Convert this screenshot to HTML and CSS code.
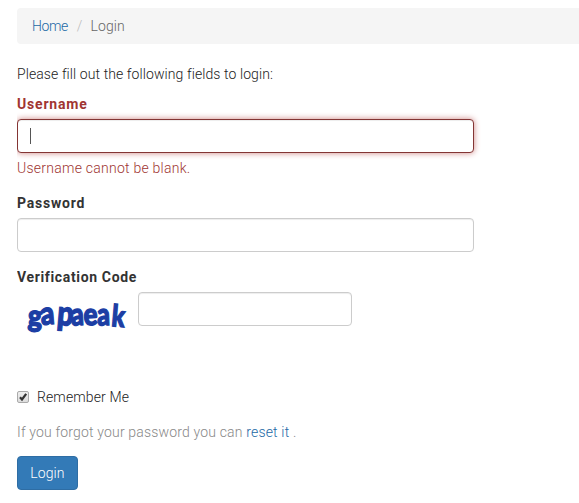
FILE: index.html
```html
<!DOCTYPE html>
<html lang="en">
<head>
  <meta charset="UTF-8" />
  <meta name="viewport" content="width=device-width, initial-scale=1.0"/>
  <title>Login</title>
  <link rel="stylesheet" href="styles.css">
</head>
<body>

  <ul class="breadcrumb">
    <li><a href="#">Home</a></li>
    <li class="active">Login</li>
  </ul>

  <p class="intro">Please fill out the following fields to login:</p>

  <form class="login-form" onsubmit="return false;">
    <div class="form-group has-error">
      <label class="username-label" for="username">Username</label>
      <input type="text" id="username" class="form-control focused" />
      <p class="help-block">Username cannot be blank.</p>
    </div>

    <div class="form-group">
      <label class="password-label" for="password">Password</label>
      <input type="password" id="password" class="form-control" />
    </div>

    <div class="form-group captcha-group">
      <label class="code-label" for="code">Verification Code</label>
      <div class="captcha-row">
        <svg class="captcha" width="120" height="50" viewBox="0 0 120 50">
          <text transform="translate(10.5 34) rotate(3) scale(.9 1)" font-size="30">g</text>
          <text transform="translate(24.5 33) rotate(-5) scale(.83 1)" font-size="32">a</text>
          <text transform="translate(39.5 32.5) rotate(5) scale(.84 1)" font-size="34">p</text>
          <text transform="translate(54.5 33.5) rotate(-3) scale(.8 1)" font-size="31">a</text>
          <text transform="translate(67 33.5) rotate(-3) scale(.84 1)" font-size="31">e</text>
          <text transform="translate(80.5 33.5) rotate(-2) scale(.8 1)" font-size="31">a</text>
          <text transform="translate(94 34) rotate(5) scale(.8 1)" font-size="30">k</text>
        </svg>
        <input type="text" id="code" class="form-control" />
      </div>
    </div>

    <div class="checkbox">
      <label>
        <span class="check">
          <svg width="12" height="12" viewBox="0 0 12 12"><path d="M3 6.2 5 8.5 9.2 2.8" /></svg>
        </span>
        <span class="remember">Remember Me</span>
      </label>
    </div>

    <div class="hint">If you forgot your password you can <a href="#">reset it</a> .</div>

    <button type="submit" class="btn">Login</button>
  </form>

</body>
</html>
```

FILE: styles.css
```css
* { box-sizing: border-box; }
body { font-family: Roboto, "Liberation Sans", sans-serif; font-size: 14px; font-weight: 300; line-height: 20px; color: #222; background: #fff; margin: 8px 0 0 17px; overflow: hidden; }
a { color: #2268a5; text-decoration: none; }

/* Breadcrumb */
.breadcrumb { display: flex; list-style: none; height: 36px; margin: 0 0 20px; padding: 8px 15px; background: #f5f5f5; border-radius: 4px 0 0 4px; }
.breadcrumb a { letter-spacing: -.4px; }
.breadcrumb .active { color: #666; letter-spacing: .1px; }
.breadcrumb .active::before { content: "/"; color: #bbb; padding: 0 8px 0 9px; }

.intro { margin: 0 0 10px; letter-spacing: .09px; }

/* Form */
.login-form { width: 457px; }
.form-group { margin-bottom: 15px; }
.form-group label { display: block; width: max-content; font-weight: 700; letter-spacing: .8px; margin-bottom: 5px; color: #333; }
.form-group .code-label { letter-spacing: .65px; }
.form-control { display: block; width: 100%; height: 34px; padding: 6px 12px; font: inherit; color: #555; background-color: #fff; border: 1px solid #ccc; border-radius: 4px; box-shadow: inset 0 1px 1px rgba(0,0,0,.075); outline: none; }
.has-error .username-label, .has-error .help-block { color: #a03532; }
.has-error .focused { border-color: #843534; box-shadow: inset 0 1px 1px rgba(0,0,0,.075), 0 0 6px #ce8483; }
.focused { background: #fff linear-gradient(#555, #555) 12px 8px / 1px 16px no-repeat; }
.help-block { width: max-content; margin: 5px 0 0; letter-spacing: .25px; }

/* Captcha */
.captcha-group { margin-bottom: 45px; }
.captcha-row { display: flex; gap: 1px; }
.captcha-row .form-control { width: 214px; }
.captcha { flex: none; font-family: Lato, sans-serif; font-weight: 900; fill: #1c3ea4; stroke: #1c3ea4; stroke-width: 1.4; }

/* Remember me */
.checkbox label { display: flex; align-items: center; letter-spacing: .12px; }
.check { display: flex; width: 12px; height: 12px; margin-right: 8px; border: 1px solid #aaa; border-radius: 2px; background: linear-gradient(#eee, #ddd); }
.check svg { flex: none; margin: -1px; fill: none; stroke: #333; stroke-width: 2.2; }

.hint { margin: 15px 0 14px; color: #888; letter-spacing: .17px; }
.btn { display: block; width: 61px; height: 34px; padding: 0; font: inherit; letter-spacing: .1px; color: #fff; background: #337ab7; border: 1px solid #2e6da4; border-radius: 4px; }
```
